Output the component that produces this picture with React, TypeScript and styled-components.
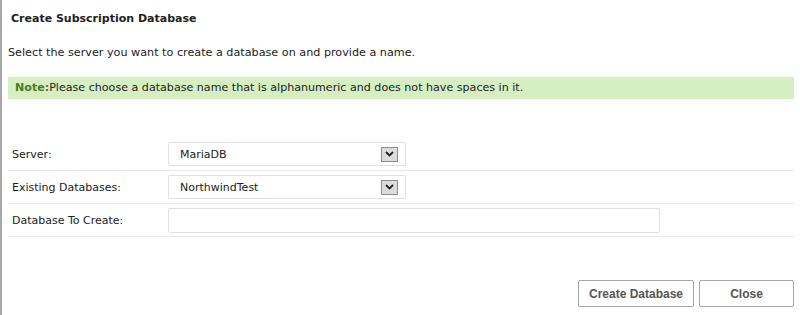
import styled, { createGlobalStyle } from "styled-components";

const GlobalStyle = createGlobalStyle`
  html, body {
    margin: 0;
    padding: 0;
    background: #ffffff;
  }
  body {
    font-family: Tahoma, "DejaVu Sans", Verdana, sans-serif;
    font-size: 11px;
    color: #222;
  }
`;

interface IField {
  label: string;
  kind: "select" | "text";
  value?: string;
}

const fields: IField[] = [
  { label: "Server:", kind: "select", value: "MariaDB" },
  { label: "Existing Databases:", kind: "select", value: "NorthwindTest" },
  { label: "Database To Create:", kind: "text" },
];

const ChevronDown = () => (
  <svg width="9" height="6" viewBox="0 0 9 6">
    <path d="M1 1 L4.5 4.5 L8 1" fill="none" stroke="#222" strokeWidth="1.8" />
  </svg>
);

const App = () => {
  return (
    <>
      <GlobalStyle />
      <Dialog>
        <Title>Create Subscription Database</Title>
        <Intro>
          Select the server you want to create a database on and provide a name.
        </Intro>
        <Note>
          <NoteLabel>Note:</NoteLabel>Please choose a database name that is
          alphanumeric and does not have spaces in it.
        </Note>
        <Form>
          {fields.map((field) => (
            <Row key={field.label}>
              <Label>{field.label}</Label>
              {field.kind === "select" ? (
                <Select>
                  <SelectValue>{field.value}</SelectValue>
                  <ArrowButton>
                    <ChevronDown />
                  </ArrowButton>
                </Select>
              ) : (
                <TextInput />
              )}
            </Row>
          ))}
        </Form>
        <Footer>
          <Button $wide>Create Database</Button>
          <Button>Close</Button>
        </Footer>
      </Dialog>
    </>
  );
};

const Dialog = styled.div`
  box-sizing: border-box;
  height: 315px;
  width: 800px;
  border-left: 2px solid #a8a8a8;
  padding: 0 6px 0 6px;
  display: flex;
  flex-direction: column;
`;

const Title = styled.div`
  font-weight: bold;
  padding: 12px 0 0 3px;
  height: 14px;
  line-height: 14px;
`;

const Intro = styled.div`
  margin-top: 20px;
  line-height: 14px;
  font-size: 11.2px;
`;

const Note = styled.div`
  margin-top: 17px;
  height: 22px;
  line-height: 22px;
  background: #d6efc2;
  padding-left: 7px;
  font-size: 11.1px;
`;

const NoteLabel = styled.span`
  font-weight: bold;
  color: #4b7a26;
`;

const Form = styled.div`
  margin-top: 39px;
`;

const Row = styled.div`
  display: flex;
  align-items: center;
  height: 32px;
  border-bottom: 1px solid #e8e8e8;
`;

const Label = styled.div`
  width: 156px;
  padding-left: 4px;
`;

const Select = styled.div`
  box-sizing: border-box;
  width: 238px;
  height: 24px;
  border: 1px solid #e0e0e0;
  border-radius: 2px;
  display: flex;
  align-items: center;
  padding: 0 7px 0 11px;
`;

const SelectValue = styled.span`
  flex: 1;
`;

const ArrowButton = styled.span`
  box-sizing: border-box;
  width: 17px;
  height: 15px;
  background: #dcdcdc;
  border: 1px solid #8e8e8e;
  display: flex;
  align-items: center;
  justify-content: center;
`;

const TextInput = styled.div`
  box-sizing: border-box;
  width: 492px;
  height: 25px;
  border: 1px solid #e0e0e0;
  border-radius: 2px;
`;

const Footer = styled.div`
  margin-top: auto;
  margin-bottom: 8px;
  display: flex;
  justify-content: flex-end;
  gap: 5px;
`;

const Button = styled.button<{ $wide?: boolean }>`
  box-sizing: border-box;
  width: ${(props) => (props.$wide ? "116px" : "95px")};
  height: 27px;
  background: #ffffff;
  border: 1px solid #a6a6a6;
  border-radius: 2px;
  font-family: "Liberation Sans", Arial, sans-serif;
  font-size: 12px;
  font-weight: bold;
  color: #555;
  padding: 0;
`;

export default App;
